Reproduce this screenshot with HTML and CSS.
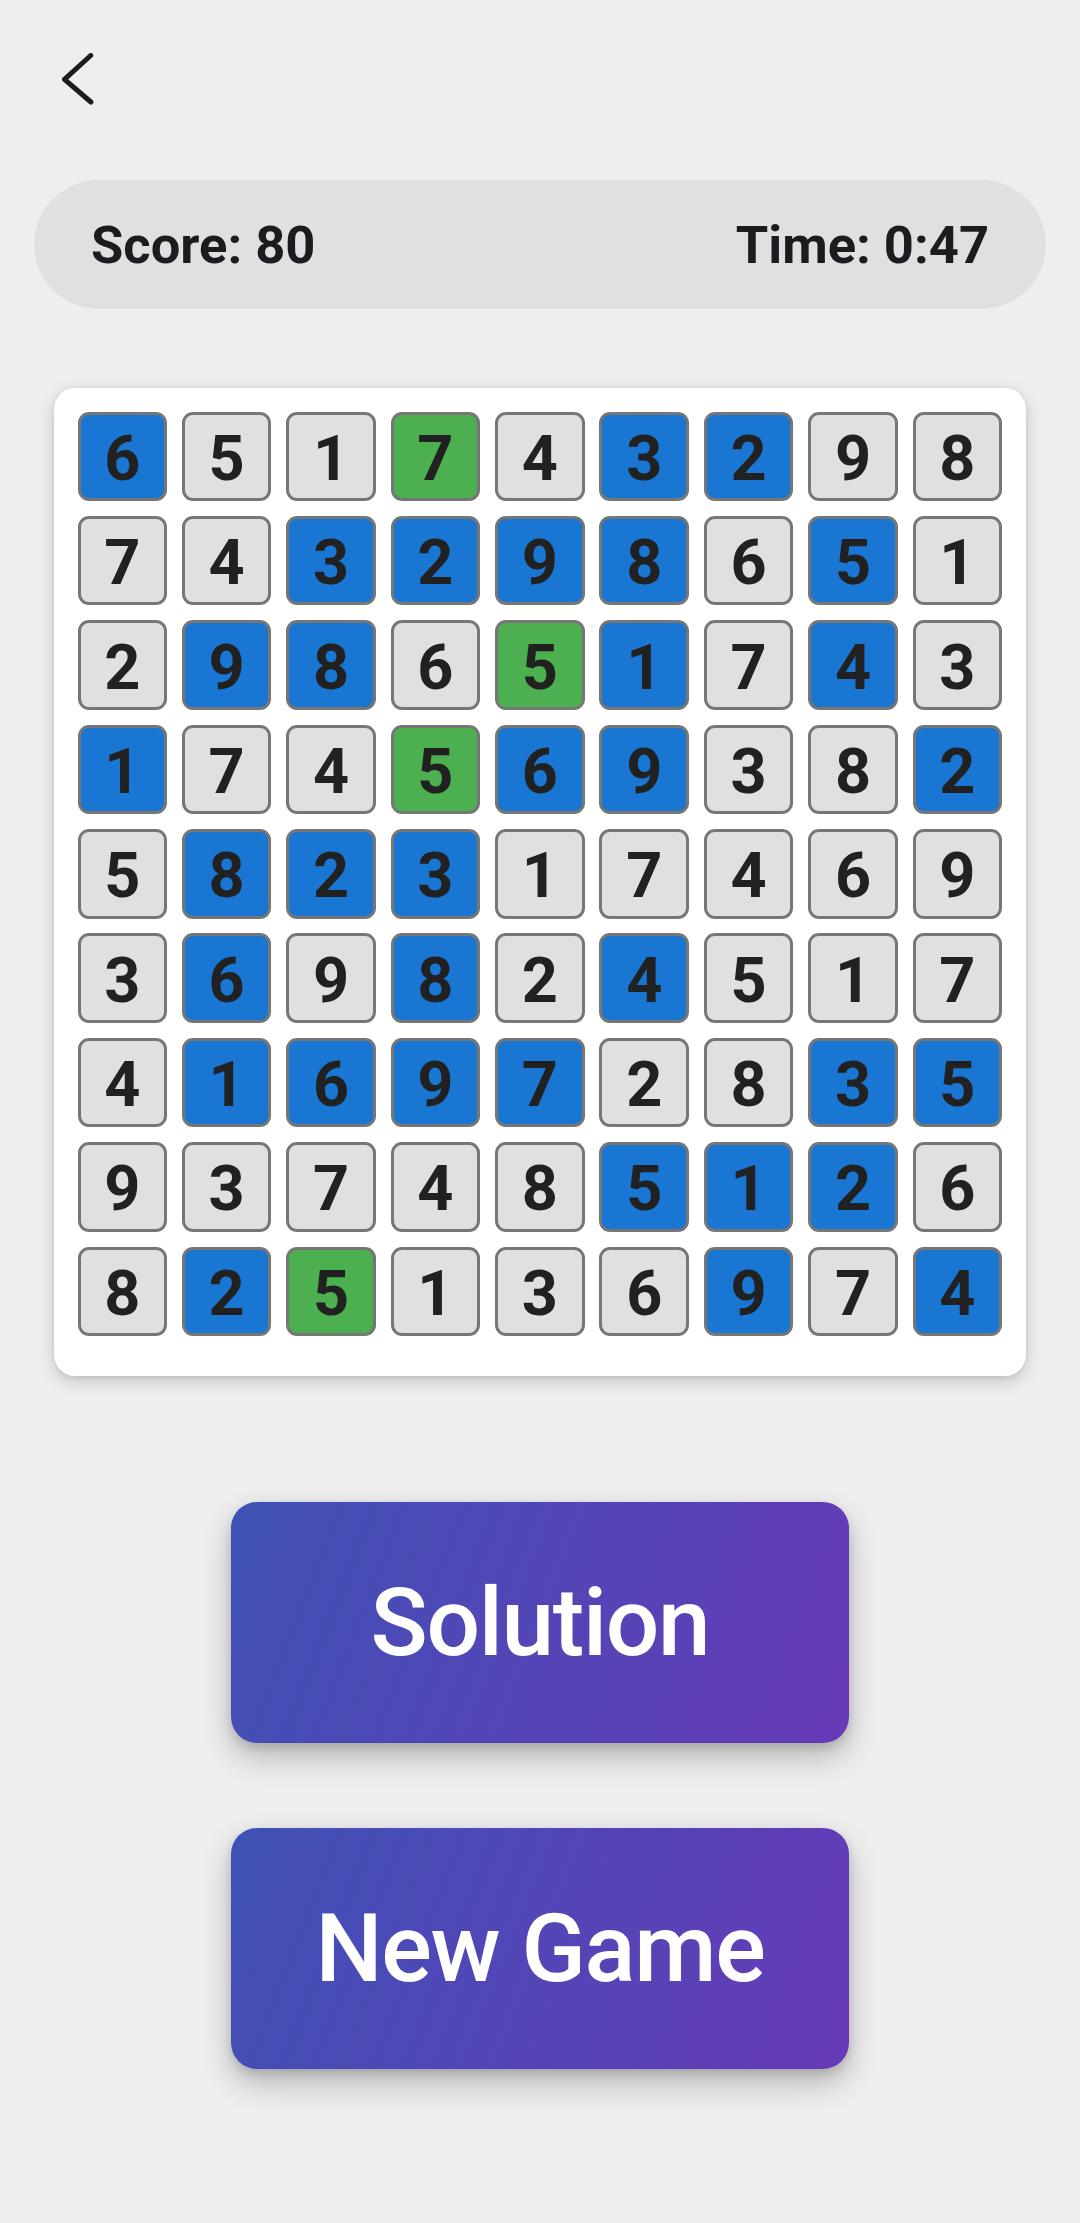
FILE: index.html
```html
<!DOCTYPE html>
<html>
<head>
<meta charset="utf-8">
<link rel="stylesheet" href="styles.css">
</head>
<body>
<div class="screen">
  <div class="topbar">
    <svg class="back" width="32" height="52" viewBox="0 0 32 52">
      <polyline points="28.7,2.5 2.5,26.3 28.9,49" fill="none" stroke="#1d1b20" stroke-width="5" stroke-linecap="round" stroke-linejoin="round"/>
    </svg>
  </div>
  <div class="statusbar">
    <span class="stat">Score: 80</span>
    <span class="stat">Time: 0:47</span>
  </div>
  <div class="card">
    <div class="grid">
      <div class="cell b">6</div><div class="cell">5</div><div class="cell">1</div><div class="cell g">7</div><div class="cell">4</div><div class="cell b">3</div><div class="cell b">2</div><div class="cell">9</div><div class="cell">8</div>
      <div class="cell">7</div><div class="cell">4</div><div class="cell b">3</div><div class="cell b">2</div><div class="cell b">9</div><div class="cell b">8</div><div class="cell">6</div><div class="cell b">5</div><div class="cell">1</div>
      <div class="cell">2</div><div class="cell b">9</div><div class="cell b">8</div><div class="cell">6</div><div class="cell g">5</div><div class="cell b">1</div><div class="cell">7</div><div class="cell b">4</div><div class="cell">3</div>
      <div class="cell b">1</div><div class="cell">7</div><div class="cell">4</div><div class="cell g">5</div><div class="cell b">6</div><div class="cell b">9</div><div class="cell">3</div><div class="cell">8</div><div class="cell b">2</div>
      <div class="cell">5</div><div class="cell b">8</div><div class="cell b">2</div><div class="cell b">3</div><div class="cell">1</div><div class="cell">7</div><div class="cell">4</div><div class="cell">6</div><div class="cell">9</div>
      <div class="cell">3</div><div class="cell b">6</div><div class="cell">9</div><div class="cell b">8</div><div class="cell">2</div><div class="cell b">4</div><div class="cell">5</div><div class="cell">1</div><div class="cell">7</div>
      <div class="cell">4</div><div class="cell b">1</div><div class="cell b">6</div><div class="cell b">9</div><div class="cell b">7</div><div class="cell">2</div><div class="cell">8</div><div class="cell b">3</div><div class="cell b">5</div>
      <div class="cell">9</div><div class="cell">3</div><div class="cell">7</div><div class="cell">4</div><div class="cell">8</div><div class="cell b">5</div><div class="cell b">1</div><div class="cell b">2</div><div class="cell">6</div>
      <div class="cell">8</div><div class="cell b">2</div><div class="cell g">5</div><div class="cell">1</div><div class="cell">3</div><div class="cell">6</div><div class="cell b">9</div><div class="cell">7</div><div class="cell b">4</div>
    </div>
  </div>
  <div class="actions">
    <div class="btn">Solution</div>
    <div class="btn">New Game</div>
  </div>
</div>
</body>
</html>
```

FILE: styles.css
```css
html, body {
  margin: 0;
  padding: 0;
  background: #eeeeee;
}
.screen {
  width: 1080px;
  min-height: 2223px;
  font-family: Roboto, "Liberation Sans", sans-serif;
}
.topbar {
  height: 180px;
  box-sizing: border-box;
  padding: 53px 0 0 62px;
}
.back {
  display: block;
}
.statusbar {
  margin: 0 34px;
  height: 129px;
  border-radius: 65px;
  background: #e0e0e0;
  display: flex;
  align-items: center;
  justify-content: space-between;
  padding: 0 57px 0 57px;
  box-sizing: border-box;
}
.stat {
  font-size: 52.5px;
  font-weight: 700;
  color: #1d1b20;
}
.card {
  margin: 79px 54px 0;
  background: #ffffff;
  border-radius: 21px;
  padding: 23.5px 23.5px 39.5px;
  box-shadow: 0 5px 16px rgba(0,0,0,0.18), 0 1px 4px rgba(0,0,0,0.08);
}
.grid {
  display: grid;
  grid-template-columns: repeat(9, 89.5px);
  grid-auto-rows: 89.5px;
  gap: 14.9px;
}
.cell {
  box-sizing: border-box;
  border: 3px solid #767676;
  border-radius: 11px;
  background: #e0e0e0;
  display: flex;
  align-items: center;
  justify-content: center;
  font-size: 63px;
  font-weight: 700;
  color: #212121;
  padding-top: 4px;
}
.cell.b { background: #1976d2; }
.cell.g { background: #4caf50; }
.actions {
  display: flex;
  flex-direction: column;
  align-items: center;
  gap: 85px;
  margin-top: 126px;
}
.btn {
  width: 618px;
  height: 241px;
  border-radius: 26px;
  background: linear-gradient(111.3deg, #3f51b5, #673ab7);
  box-shadow: 0 14px 30px rgba(0,0,0,0.24), 0 4px 10px rgba(0,0,0,0.12);
  display: flex;
  align-items: center;
  justify-content: center;
  color: #ffffff;
  font-size: 94.5px;
  font-weight: 500;
  letter-spacing: -1.3px;
}
```
